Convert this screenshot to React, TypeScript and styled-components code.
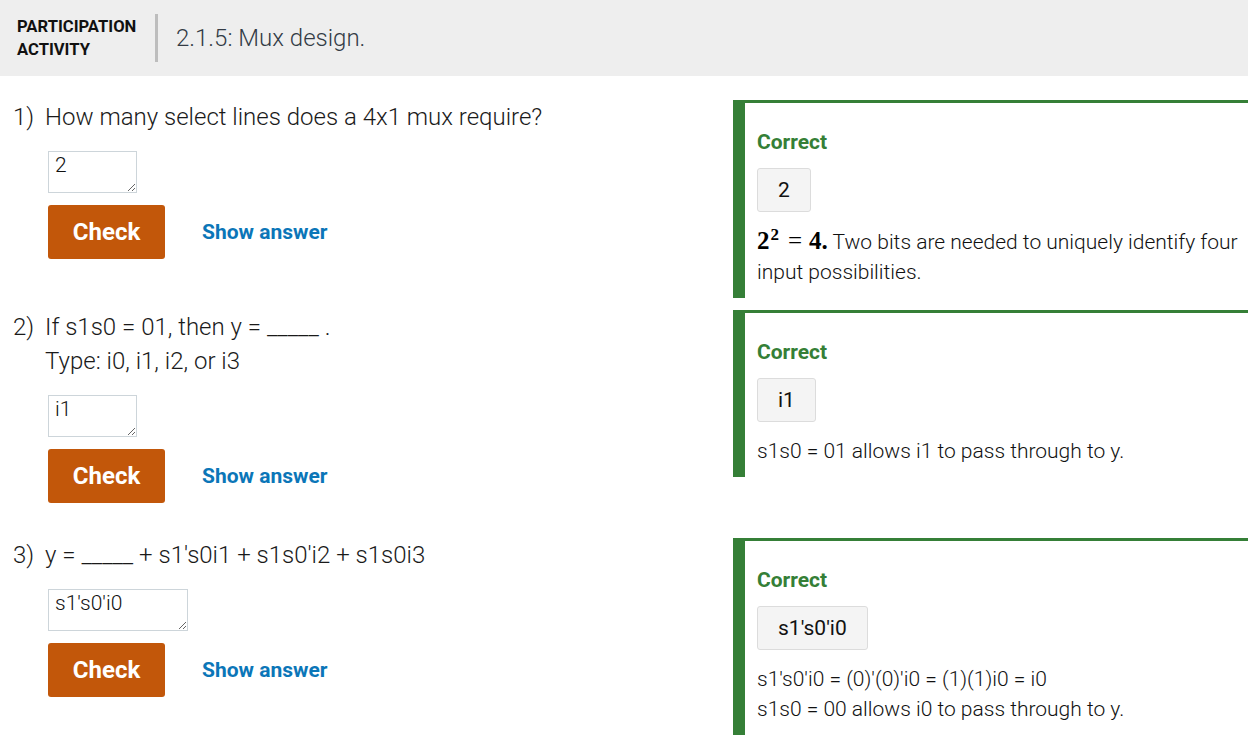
import React from "react";
import styled, { createGlobalStyle } from "styled-components";

const GlobalStyle = createGlobalStyle`
  html, body { margin: 0; padding: 0; background: #ffffff; overflow: hidden; }
  body { font-family: Roboto, "Noto Sans", Arial, sans-serif; color: #222; }
`;

const Header = styled.header`
  display: flex;
  align-items: center;
  height: 76px;
  background: #eeeeee;
  padding-left: 17px;
  box-sizing: border-box;
`;

const Label = styled.div`
  font-size: 16.6px;
  font-weight: 700;
  line-height: 23px;
  color: #111;
  width: 120px;
`;

const Divider = styled.div`
  width: 3px;
  height: 48px;
  background: #bdbdbd;
  margin-left: 18px;
`;

const Title = styled.h1`
  margin: 0 0 0 18px;
  font-size: 24px;
  font-weight: 300;
  color: #333b45;
`;

const Main = styled.main`
  padding: 24px 0 0 13px;
`;

const Row = styled.section`
  display: flex;
  align-items: flex-start;
  margin-bottom: 12px;
`;

const Left = styled.div`
  width: 720px;
  flex-shrink: 0;
  padding-bottom: 23px;
`;

const QuestionLine = styled.div`
  display: flex;
  font-size: 24px;
  font-weight: 300;
  line-height: 34px;
  color: #1a1a1a;
`;

const Num = styled.span`
  width: 32px;
  flex-shrink: 0;
`;

const Prompt = styled.div``;

const Controls = styled.div`
  margin-left: 35px;
`;

const Answer = styled.textarea<{ $w: number }>`
  display: block;
  margin-top: 17px;
  width: ${(p) => p.$w}px;
  height: 42px;
  box-sizing: border-box;
  border: 1px solid #cdd5da;
  border-radius: 0;
  padding: 1px 6px;
  font-family: Roboto, Arial, sans-serif;
  font-size: 21px;
  font-weight: 300;
  line-height: 24px;
  color: #111;
  background: #fff;
  outline: none;
`;

const Actions = styled.div`
  display: flex;
  align-items: center;
  margin-top: 12px;
`;

const CheckButton = styled.button`
  width: 117px;
  height: 54px;
  border: none;
  border-radius: 3px;
  background: #c2570a;
  color: #fff;
  font-family: Roboto, Arial, sans-serif;
  font-size: 24px;
  font-weight: 700;
  padding: 0;
`;

const ShowAnswer = styled.button`
  margin-left: 37px;
  border: none;
  background: none;
  padding: 0;
  color: #0b76b8;
  font-family: Roboto, Arial, sans-serif;
  font-size: 21px;
  font-weight: 700;
`;

const Panel = styled.div`
  flex: 1;
  min-width: 0;
  border-left: 12px solid #357f37;
  border-top: 3px solid #357f37;
  padding: 27px 12px 11px 12px;
`;

const Correct = styled.div`
  font-size: 21px;
  font-weight: 700;
  line-height: 24px;
  color: #357f37;
`;

const AnswerBox = styled.div`
  display: inline-block;
  margin-top: 14px;
  padding: 0 20px;
  height: 44px;
  line-height: 42px;
  box-sizing: border-box;
  background: #f4f4f4;
  border: 1px solid #dcdcdc;
  border-radius: 3px;
  font-size: 21px;
  font-weight: 400;
  color: #111;
`;

const Explanation = styled.div`
  margin-top: 14px;
  font-size: 21px;
  font-weight: 300;
  line-height: 30px;
  color: #111;
  white-space: nowrap;
`;

const Math = styled.span`
  font-family: "Liberation Serif", "DejaVu Serif", serif;
  font-size: 25px;
  font-weight: 700;
  line-height: 30px;
  color: #000;
`;

const MathOp = styled.span`
  font-family: "Liberation Serif", "DejaVu Serif", serif;
  font-size: 25px;
  line-height: 30px;
  font-weight: 400;
  margin: 0 7px 0 8px;
  color: #000;
`;

const Sup = styled.sup`
  font-size: 17px;
  line-height: 0;
  margin-left: 1px;
  margin-right: 1px;
`;

type Q = {
  n: string;
  prompt: React.ReactNode;
  value: string;
  w: number;
  answer: string;
  explanation: React.ReactNode;
};

const questions: Q[] = [
  {
    n: "1)",
    prompt: "How many select lines does a 4x1 mux require?",
    value: "2",
    w: 89,
    answer: "2",
    explanation: (
      <>
        <Math>
          2<Sup>2</Sup>
        </Math>
        <MathOp>=</MathOp>
        <Math>4.</Math> Two bits are needed to uniquely identify four
        <br />
        input possibilities.
      </>
    ),
  },
  {
    n: "2)",
    prompt: (
      <>
        If s1s0 = 01, then y = _____ .
        <br />
        Type: i0, i1, i2, or i3
      </>
    ),
    value: "i1",
    w: 89,
    answer: "i1",
    explanation: "s1s0 = 01 allows i1 to pass through to y.",
  },
  {
    n: "3)",
    prompt: "y = _____ + s1's0i1 + s1s0'i2 + s1s0i3",
    value: "s1's0'i0",
    w: 140,
    answer: "s1's0'i0",
    explanation: (
      <>
        s1's0'i0 = (0)'(0)'i0 = (1)(1)i0 = i0
        <br />
        s1s0 = 00 allows i0 to pass through to y.
      </>
    ),
  },
];

export default function App() {
  return (
    <>
      <GlobalStyle />
      <Header>
        <Label>
          PARTICIPATION
          <br />
          ACTIVITY
        </Label>
        <Divider />
        <Title>2.1.5: Mux design.</Title>
      </Header>
      <Main>
        {questions.map((q) => (
          <Row key={q.n}>
            <Left>
              <QuestionLine>
                <Num>{q.n}</Num>
                <Prompt>{q.prompt}</Prompt>
              </QuestionLine>
              <Controls>
                <Answer $w={q.w} readOnly defaultValue={q.value} />
                <Actions>
                  <CheckButton>Check</CheckButton>
                  <ShowAnswer>Show answer</ShowAnswer>
                </Actions>
              </Controls>
            </Left>
            <Panel>
              <Correct>Correct</Correct>
              <AnswerBox>{q.answer}</AnswerBox>
              <Explanation>{q.explanation}</Explanation>
            </Panel>
          </Row>
        ))}
      </Main>
    </>
  );
}
